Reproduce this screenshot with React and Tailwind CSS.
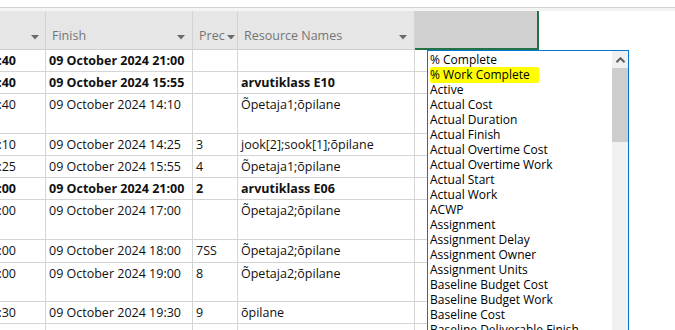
import React from 'react';

const rows = [
  { h: 'h-[22px]', start: '09 October 2024 08:40', finish: '09 October 2024 21:00', prec: '', res: '', bold: true },
  { h: 'h-[22px]', start: '09 October 2024 08:40', finish: '09 October 2024 15:55', prec: '', res: 'arvutiklass E10', bold: true },
  { h: 'h-[40px]', start: '09 October 2024 08:40', finish: '09 October 2024 14:10', prec: '', res: 'Õpetaja1;õpilane' },
  { h: 'h-[22px]', start: '09 October 2024 14:10', finish: '09 October 2024 14:25', prec: '3', res: 'jook[2];sook[1];õpilane' },
  { h: 'h-[22px]', start: '09 October 2024 14:25', finish: '09 October 2024 15:55', prec: '4', res: 'Õpetaja1;õpilane' },
  { h: 'h-[22px]', start: '09 October 2024 16:00', finish: '09 October 2024 21:00', prec: '2', res: 'arvutiklass E06', bold: true },
  { h: 'h-[40px]', start: '09 October 2024 16:00', finish: '09 October 2024 17:00', prec: '', res: 'Õpetaja2;õpilane' },
  { h: 'h-[23px]', start: '09 October 2024 17:00', finish: '09 October 2024 18:00', prec: '7SS', res: 'Õpetaja2;õpilane' },
  { h: 'h-[39px]', start: '09 October 2024 18:00', finish: '09 October 2024 19:00', prec: '8', res: 'Õpetaja2;õpilane' },
  { h: 'h-[22px]', start: '09 October 2024 18:30', finish: '09 October 2024 19:30', prec: '9', res: 'õpilane' },
  { h: 'h-[22px]', start: '', finish: '', prec: '', res: '' },
];

const fields = [
  '% Complete',
  '% Work Complete',
  'Active',
  'Actual Cost',
  'Actual Duration',
  'Actual Finish',
  'Actual Overtime Cost',
  'Actual Overtime Work',
  'Actual Start',
  'Actual Work',
  'ACWP',
  'Assignment',
  'Assignment Delay',
  'Assignment Owner',
  'Assignment Units',
  'Baseline Budget Cost',
  'Baseline Budget Work',
  'Baseline Cost',
  'Baseline Deliverable Finish',
];

function Arrow() {
  return (
    <svg width="8" height="5" viewBox="0 0 8 5" className="shrink-0">
      <path d="M0 0h8L4 4.5z" fill="#6a6a6a" />
    </svg>
  );
}

function HeaderCell({ w, label, arrowPad = 'pr-[7px]' }) {
  return (
    <div className={`${w} h-full border-r border-[#d2d2d2] flex items-end justify-between pl-[6px] ${arrowPad} pb-[5px]`}>
      <span className="text-[#757575] leading-[16px]">{label}</span>
      <div className="mb-[4px]">
        <Arrow />
      </div>
    </div>
  );
}

export default function App() {
  return (
    <div
      className="w-[675px] h-[330px] overflow-hidden bg-white relative text-[12.5px] text-[#111]"
      style={{ fontFamily: '"Open Sans", "Noto Sans", sans-serif' }}
    >
      <div className="h-[7px]" />
      <div className="h-px bg-[#d3d3d3]" />
      <div className="h-[3px] bg-[#f4f4f4]" />

      {/* header */}
      <div className="flex h-[39px]">
        <div className="flex h-full bg-[#e6e6e6] border-b border-[#cfcfcf]">
          <div className="w-[46px] h-full border-r border-[#d2d2d2] flex items-end justify-end pr-[6px] pb-[9px]">
            <Arrow />
          </div>
          <HeaderCell w="w-[147px]" label="Finish" />
          <HeaderCell w="w-[45px]" label="Prec" arrowPad="pr-[2px]" />
          <HeaderCell w="w-[177px]" label="Resource Names" />
        </div>
        <div className="w-[124px] h-full bg-[#d1d1d1] border-r-2 border-b-2 border-[#217346]" />
        <div className="flex-1" />
      </div>

      {/* body */}
      <div className="flex flex-col">
        {rows.map((r, i) => (
          <div key={i} className={`flex ${r.h} leading-[21px] ${r.bold ? 'font-bold' : ''}`}>
            <div className="w-[46px] border-r border-b border-[#d4d4d4] overflow-hidden flex justify-end pr-[29px]">
              <span className="whitespace-nowrap">{r.start}</span>
            </div>
            <div className="w-[147px] border-r border-b border-[#d4d4d4] pl-[3px] whitespace-nowrap overflow-hidden">
              {r.finish}
            </div>
            <div className="w-[45px] border-r border-b border-[#d4d4d4] pl-[3px] whitespace-nowrap overflow-hidden">
              {r.prec}
            </div>
            <div className="w-[177px] border-r border-b border-[#d4d4d4] pl-[3px] whitespace-nowrap overflow-hidden">
              {r.res}
            </div>
            <div className="w-[124px] border-r border-b border-[#d4d4d4]" />
          </div>
        ))}
      </div>

      {/* field list dropdown */}
      <div className="absolute left-[427px] top-[50px] w-[202px] h-[300px] border border-[#0078d7] bg-white flex">
        <div className="flex-1 flex flex-col pl-[2px] pt-px text-[12px] text-[#000]">
          {fields.map((f, i) => (
            <div key={f} className="h-[15px] leading-[15px] whitespace-nowrap">
              {i === 1 ? (
                <span className="bg-[#ffff00] inline-block pr-[9px] leading-[16px] rounded-[2px]">{f}</span>
              ) : (
                f
              )}
            </div>
          ))}
        </div>
        <div className="w-[16px] h-full bg-[#f0f0f0] flex flex-col">
          <div className="h-[17px] flex items-center justify-center">
            <svg width="9" height="6" viewBox="0 0 9 6">
              <path d="M0.5 5.2L4.5 1.2L8.5 5.2" stroke="#606060" strokeWidth="2" fill="none" />
            </svg>
          </div>
          <div className="h-[74px] bg-[#cdcdcd]" />
        </div>
      </div>
    </div>
  );
}
